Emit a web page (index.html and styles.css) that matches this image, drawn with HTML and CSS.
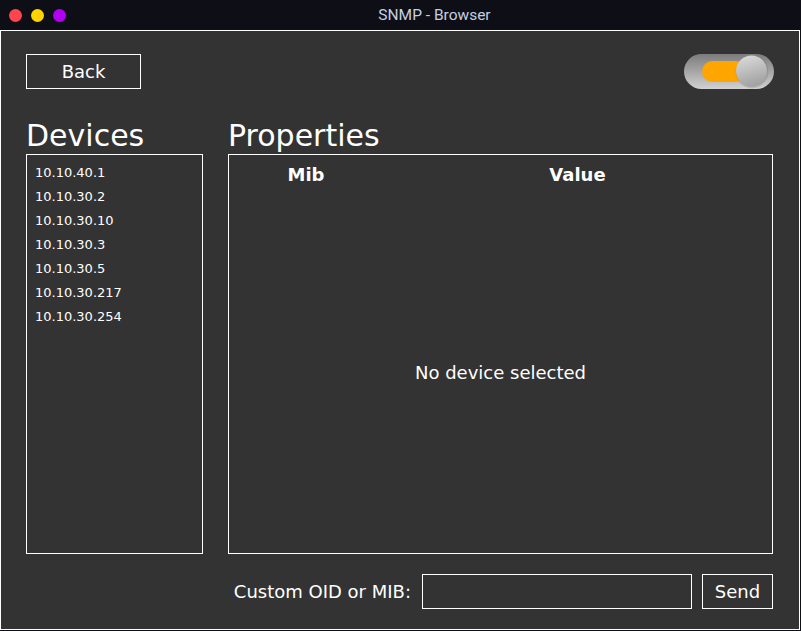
FILE: index.html
```html
<!DOCTYPE html>
<html>
<head>
<meta charset="utf-8">
<title>SNMP - Browser</title>
<link rel="stylesheet" href="styles.css">
</head>
<body>
<div class="window">
  <div class="titlebar">
    <div class="lights">
      <span class="dot red"></span>
      <span class="dot yellow"></span>
      <span class="dot purple"></span>
    </div>
    <div class="title">SNMP - Browser</div>
  </div>
  <div class="content">
    <div class="toprow">
      <button class="btn back">Back</button>
      <svg class="toggle" width="90" height="35" viewBox="0 0 90 35">
        <defs>
          <linearGradient id="trk" x1="0" y1="0" x2="0" y2="1">
            <stop offset="0" stop-color="#7c7c7c"/>
            <stop offset="0.5" stop-color="#a6a6a6"/>
            <stop offset="1" stop-color="#d2d2d2"/>
          </linearGradient>
          <linearGradient id="knb" x1="0" y1="0" x2="0.3" y2="1">
            <stop offset="0" stop-color="#dedede"/>
            <stop offset="1" stop-color="#a4a4a4"/>
          </linearGradient>
          <radialGradient id="shd" cx="0.5" cy="0.5" r="0.5">
            <stop offset="0.8" stop-color="#000" stop-opacity="0.25"/>
            <stop offset="1" stop-color="#000" stop-opacity="0"/>
          </radialGradient>
        </defs>
        <rect x="0" y="0" width="90" height="35" rx="17.5" fill="url(#trk)"/>
        <rect x="18" y="7" width="44" height="21" rx="10.5" fill="#ffa500"/>
        <circle cx="68" cy="18" r="17" fill="url(#shd)"/>
        <circle cx="67.5" cy="17" r="15.5" fill="url(#knb)"/>
      </svg>
    </div>
    <div class="main">
      <section class="devices">
        <h2 class="heading">Devices</h2>
        <ul class="list">
          <li>10.10.40.1</li>
          <li>10.10.30.2</li>
          <li>10.10.30.10</li>
          <li>10.10.30.3</li>
          <li>10.10.30.5</li>
          <li>10.10.30.217</li>
          <li>10.10.30.254</li>
        </ul>
      </section>
      <section class="properties">
        <h2 class="heading">Properties</h2>
        <div class="table">
          <div class="thead">
            <div class="th">Mib</div>
            <div class="th">Value</div>
          </div>
          <div class="empty">No device selected</div>
        </div>
      </section>
    </div>
    <div class="bottomrow">
      <label class="label" for="oid">Custom OID or MIB:</label>
      <input id="oid" class="input" type="text">
      <button class="btn send">Send</button>
    </div>
  </div>
</div>
</body>
</html>
```
FILE: styles.css
```css
html, body {
  margin: 0;
  padding: 0;
  background: #0e0f16;
}
.window {
  width: 801px;
  height: 631px;
  display: flex;
  flex-direction: column;
}
.titlebar {
  height: 30px;
  background: #0e0f16;
  display: flex;
  align-items: center;
}
.lights {
  display: flex;
  gap: 9px;
  padding-left: 9px;
  width: 60px;
}
.dot {
  width: 13px;
  height: 13px;
  border-radius: 50%;
  display: block;
}
.red { background: #ff4650; }
.yellow { background: #ffd400; }
.purple { background: #b300f2; }
.title {
  flex: 1;
  text-align: center;
  padding-right: 1px;
  font-family: Roboto, "Liberation Sans", sans-serif;
  font-size: 15.5px;
  color: #c6cee0;
  line-height: 30px;
}
.content {
  border: 1px solid #ffffff;
  background: #333333;
  padding: 23px 26px 20px 25px;
  box-sizing: border-box;
  height: 600px;
  width: 800px;
  display: flex;
  flex-direction: column;
  font-family: "DejaVu Sans", Verdana, sans-serif;
  color: #ffffff;
}
.toprow {
  display: flex;
  justify-content: space-between;
  align-items: flex-start;
  height: 35px;
}
.toggle {
  display: block;
  margin-right: -1px;
}
.btn {
  background: #333333;
  border: 1px solid #ffffff;
  color: #ffffff;
  font-family: "DejaVu Sans", Verdana, sans-serif;
  font-size: 18px;
  padding: 0;
  margin: 0;
  height: 35px;
  box-sizing: border-box;
  line-height: 33px;
}
.back { width: 115px; }
.send { width: 71px; }
.main {
  display: flex;
  gap: 25px;
  margin-top: 29px;
}
.devices { width: 177px; }
.properties { width: 545px; }
.heading {
  margin: 0;
  font-weight: normal;
  font-size: 30px;
  line-height: 36px;
}
.list {
  list-style: none;
  margin: 0;
  height: 400px;
  box-sizing: border-box;
  border: 1px solid #ffffff;
  padding: 6px 0 0 8px;
  font-size: 13px;
  line-height: 24px;
}
.table {
  height: 400px;
  box-sizing: border-box;
  border: 1px solid #ffffff;
  display: flex;
  flex-direction: column;
}
.thead {
  display: grid;
  grid-template-columns: 154px 1fr;
  padding-top: 6px;
  height: 37px;
  box-sizing: border-box;
}
.th {
  text-align: center;
  font-weight: bold;
  font-size: 18px;
  line-height: 28px;
}
.empty {
  flex: 1;
  display: flex;
  align-items: center;
  justify-content: center;
  font-size: 18px;
}
.bottomrow {
  margin-top: 20px;
  display: flex;
  justify-content: flex-end;
  align-items: center;
  gap: 10px;
  height: 35px;
}
.label {
  font-size: 18px;
  margin-right: 1px;
}
.input {
  width: 270px;
  height: 35px;
  box-sizing: border-box;
  border: 1px solid #ffffff;
  background: #333333;
  color: #ffffff;
  margin: 0;
  padding: 0 6px;
  font-family: "DejaVu Sans", Verdana, sans-serif;
  font-size: 16px;
  outline: none;
}
```
